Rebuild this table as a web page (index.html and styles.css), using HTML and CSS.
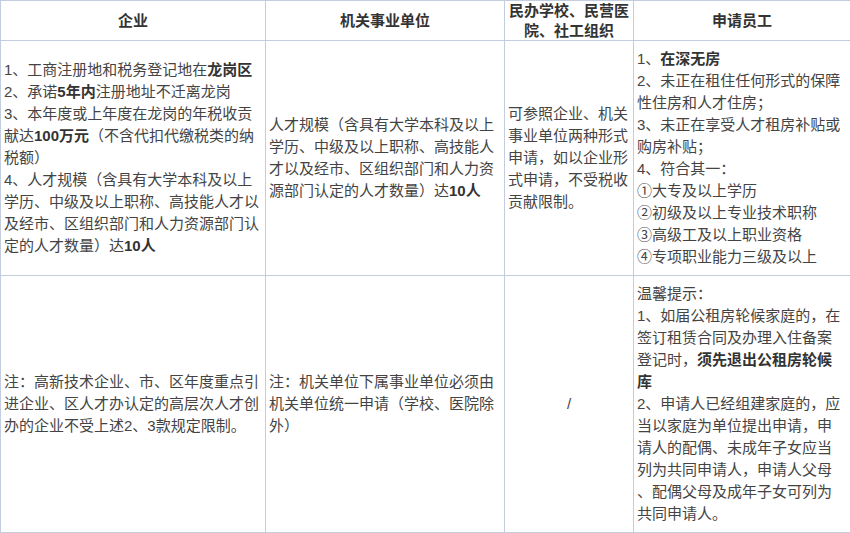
FILE: index.html
```html
<!DOCTYPE html>
<html lang="zh-CN">
<head>
<meta charset="utf-8">
<title>申请条件</title>
<link rel="stylesheet" href="styles.css">
</head>
<body>
<table class="grid">
  <colgroup>
    <col class="c1">
    <col class="c2">
    <col class="c3">
    <col class="c4">
  </colgroup>
  <thead>
    <tr>
      <th>企业</th>
      <th>机关事业单位</th>
      <th>民办学校、民营医<br>院、社工组织</th>
      <th>申请员工</th>
    </tr>
  </thead>
  <tbody>
    <tr>
      <td>1、工商注册地和税务登记地在<b>龙岗区</b><br>2、承诺<b>5年内</b>注册地址不迁离龙岗<br>3、本年度或上年度在龙岗的年税收贡<br>献达<b>100万元</b>（不含代扣代缴税类的纳<br>税额）<br>4、人才规模（含具有大学本科及以上<br>学历、中级及以上职称、高技能人才以<br>及经市、区组织部门和人力资源部门认<br>定的人才数量）达<b>10人</b></td>
      <td>人才规模（含具有大学本科及以上<br>学历、中级及以上职称、高技能人<br>才以及经市、区组织部门和人力资<br>源部门认定的人才数量）达<b>10人</b></td>
      <td>可参照企业、机关<br>事业单位两种形式<br>申请，如以企业形<br>式申请，不受税收<br>贡献限制。</td>
      <td>1、<b>在深无房</b><br>2、未正在租住任何形式的保障<br>性住房和人才住房；<br>3、未正在享受人才租房补贴或<br>购房补贴；<br>4、符合其一：<br>①大专及以上学历<br>②初级及以上专业技术职称<br>③高级工及以上职业资格<br>④专项职业能力三级及以上</td>
    </tr>
    <tr>
      <td>注：高新技术企业、市、区年度重点引<br>进企业、区人才办认定的高层次人才创<br>办的企业不受上述2、3款规定限制。</td>
      <td>注：机关单位下属事业单位必须由<br>机关单位统一申请（学校、医院除<br>外）</td>
      <td class="center">/</td>
      <td>温馨提示：<br>1、如届公租房轮候家庭的，在<br>签订租赁合同及办理入住备案<br>登记时，<b>须先退出公租房轮候<br>库</b><br>2、申请人已经组建家庭的，应<br>当以家庭为单位提出申请，申<br>请人的配偶、未成年子女应当<br>列为共同申请人，申请人父母<br>、配偶父母及成年子女可列为<br>共同申请人。</td>
    </tr>
  </tbody>
</table>
</body>
</html>
```

FILE: styles.css
```css
html, body {
  margin: 0;
  padding: 0;
  background: #ffffff;
}

.grid {
  border-collapse: collapse;
  table-layout: fixed;
  width: 850px;
  font-family: "Liberation Sans", "Noto Sans CJK SC", sans-serif;
  font-size: 15px;
  color: #444444;
}

.c1 { width: 265px; }
.c2 { width: 239px; }
.c3 { width: 129px; }
.c4 { width: 217px; }

.grid th,
.grid td {
  border: 1px solid #c4cde0;
  vertical-align: middle;
  white-space: nowrap;
  overflow: hidden;
}

.grid th {
  padding: 0 3px;
  line-height: 19.5px;
  font-weight: bold;
  color: #333333;
  text-align: center;
}

.grid td {
  padding: 7px 3px;
  line-height: 22px;
  text-align: left;
}

.grid td.center {
  text-align: center;
}

.grid b {
  font-weight: bold;
  color: #333333;
}
```
